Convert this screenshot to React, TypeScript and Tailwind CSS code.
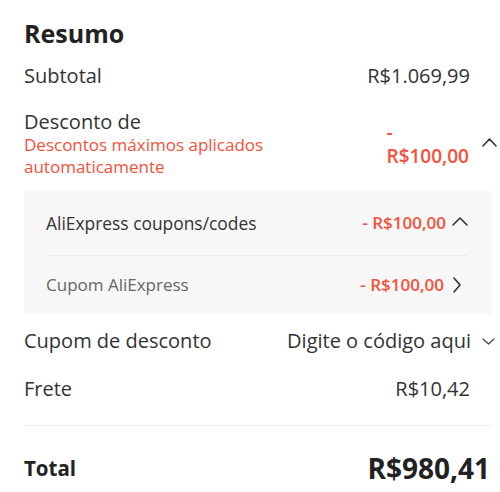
import React from "react";

const RED = "text-[#f4513b]";

function ChevronUp({ w, h, className }: { w: number; h: number; className?: string }) {
  return (
    <svg width={w} height={h} viewBox={`0 0 ${w} ${h}`} className={className} fill="none">
      <polyline points={`1,${h - 1} ${w / 2},1 ${w - 1},${h - 1}`} stroke="#333" strokeWidth="1.6" strokeLinecap="round" strokeLinejoin="round" />
    </svg>
  );
}

function ChevronDown({ w, h, className }: { w: number; h: number; className?: string }) {
  return (
    <svg width={w} height={h} viewBox={`0 0 ${w} ${h}`} className={className} fill="none">
      <polyline points={`1,1 ${w / 2},${h - 1} ${w - 1},1`} stroke="#444" strokeWidth="1.3" strokeLinecap="round" strokeLinejoin="round" />
    </svg>
  );
}

function ChevronRight({ w, h, className }: { w: number; h: number; className?: string }) {
  return (
    <svg width={w} height={h} viewBox={`0 0 ${w} ${h}`} className={className} fill="none">
      <polyline points={`1,1 ${w - 1},${h / 2} 1,${h - 1}`} stroke="#333" strokeWidth="1.6" strokeLinecap="round" strokeLinejoin="round" />
    </svg>
  );
}

export default function App() {
  return (
    <div
      className="w-[500px] h-[492px] bg-white pl-6 text-[#333]"
      style={{ fontFamily: '"Open Sans", "Noto Sans", sans-serif' }}
    >
      <div className="pt-[17px] text-[25px] leading-[32px] font-bold text-[#222]">Resumo</div>

      <div className="mt-[13px] flex items-center justify-between text-[20px] leading-[28px]">
        <span>Subtotal</span>
        <span className="mr-[30px]">R$1.069,99</span>
      </div>

      <div className="mt-[20px] flex items-center justify-between">
        <div>
          <div className="text-[20px] leading-[24px]">Desconto de</div>
          <div className={`text-[17px] leading-[22px] ${RED}`}>
            Descontos máximos aplicados
            <br />
            automaticamente
          </div>
        </div>
        <div className="mr-[3px] flex items-center">
          <div className={`text-[19px] leading-[24px] font-semibold ${RED}`}>
            <div>-</div>
            <div>R$100,00</div>
          </div>
          <ChevronUp w={15} h={9} className="ml-[13px] mb-[4px]" />
        </div>
      </div>

      <div className="mt-[13px] mr-[8px] bg-[#f7f7f7] pl-[22px] pr-[24px]">
        <div className="h-[64px] flex items-center justify-between text-[17px]">
          <span className="text-[17.4px] text-[#333]">AliExpress coupons/codes</span>
          <div className="flex items-center">
            <span className={`font-semibold ${RED}`}>- R$100,00</span>
            <ChevronUp w={16} h={9} className="ml-[6px] mb-[3px]" />
          </div>
        </div>
        <div className="h-px bg-[#ececec]" />
        <div className="h-[58px] flex items-center justify-between text-[17px]">
          <span className="text-[#666]">Cupom AliExpress</span>
          <div className="flex items-center">
            <span className={`font-semibold ${RED}`}>- R$100,00</span>
            <ChevronRight w={8} h={16} className="ml-[9px] mr-[7px]" />
          </div>
        </div>
      </div>

      <div className="mt-[13px] flex items-center justify-between text-[20px] leading-[28px]">
        <span>Cupom de desconto</span>
        <div className="mr-[5px] flex items-center">
          <span>Digite o código aqui</span>
          <ChevronDown w={13} h={7} className="ml-[11px]" />
        </div>
      </div>

      <div className="mt-[20px] flex items-center justify-between text-[20px] leading-[28px]">
        <span>Frete</span>
        <span className="mr-[30px]">R$10,42</span>
      </div>

      <div className="mt-[22px] mr-[8px] h-px bg-[#efefef]" />

      <div className="mt-[22px] flex items-center justify-between text-[#222]">
        <span className="text-[20.5px] leading-[40px] font-bold">Total</span>
        <span className="mr-[10px] text-[28px] leading-[40px] font-bold">R$980,41</span>
      </div>
    </div>
  );
}
